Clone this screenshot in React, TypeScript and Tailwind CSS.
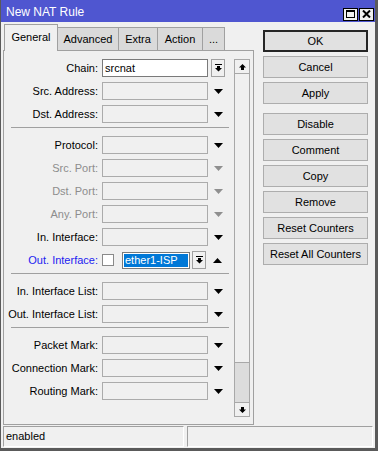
import React from 'react';

// Winbox-style "New NAT Rule" dialog
const ink = '#000';

function Down({ gray }: { gray?: boolean }) {
  return (
    <svg width="9" height="5" viewBox="0 0 9 5">
      <path d="M0 0h9L4.5 5z" fill={gray ? '#8f8f8f' : ink} />
    </svg>
  );
}

function Up() {
  return (
    <svg width="9" height="5" viewBox="0 0 9 5">
      <path d="M0 5h9L4.5 0z" fill={ink} />
    </svg>
  );
}

// combobox expand button: bar over a down arrow
function ComboBtn() {
  return (
    <div className="w-[14px] h-[18px] border border-[#a0a0a0] bg-[#f0f0f0] flex items-center justify-center">
      <svg width="7" height="8" viewBox="0 0 7 8">
        <path d="M0 0h7v1H0z M2 2h3v2h2L3.5 7.5 0 4h2z" fill={ink} />
      </svg>
    </div>
  );
}

function ScrollArrow({ down }: { down?: boolean }) {
  return (
    <svg width="7" height="6" viewBox="0 0 7 6" className={down ? 'rotate-180' : ''}>
      <path d="M3.5 0L7 3.5H5V6H2V3.5H0z" fill={ink} />
    </svg>
  );
}

type Kind = 'normal' | 'disabled';

function Row({ label, value, kind = 'normal', combo }: { label: string; value?: string; kind?: Kind; combo?: boolean }) {
  const disabled = kind === 'disabled';
  return (
    <div className="flex h-[18px] items-center">
      <div className={`w-[94px] text-right whitespace-nowrap ${disabled ? 'text-[#8d8d8d]' : 'text-black'}`}>{label}</div>
      <div
        className={`ml-[4px] w-[106px] h-[18px] border flex items-center pl-[2px] ${
          value !== undefined ? 'bg-white border-[#7a7a7a]' : 'bg-[#f0f0f0] border-[#ababab]'
        }`}
      >
        {value}
      </div>
      <div className="w-[20px] flex items-center justify-center">
        {combo ? <ComboBtn /> : <Down gray={disabled} />}
      </div>
    </div>
  );
}

function Sep() {
  return <div className="ml-[7px] mr-[2px] h-px bg-[#a0a0a0] -mt-px mb-[3px]" />;
}

function Btn({ children, primary, className = '' }: { children: React.ReactNode; primary?: boolean; className?: string }) {
  return (
    <div
      className={`h-[22px] w-[105px] flex items-center justify-center bg-[#e1e1e1] ${
        primary ? 'border-2 border-[#262626]' : 'border border-[#adadad]'
      } ${className}`}
    >
      {children}
    </div>
  );
}

const tabs = [
  { name: 'Advanced', w: 'w-[61px]' },
  { name: 'Extra', w: 'w-[39px]' },
  { name: 'Action', w: 'w-[45px]' },
  { name: '...', w: 'w-[22px]' },
];

export default function App() {
  return (
    <div className="w-[378px] h-[451px] bg-[#f0f0f0] border-l border-r-[3px] border-b-[3px] border-[#5a5a5a] text-[11px] leading-none text-black font-['Liberation_Sans',Arial,sans-serif] overflow-hidden">
      {/* title bar */}
      <div className="h-[22px] bg-[#4f56d0] flex items-center justify-between pl-[5px] pr-[1px]">
        <span className="text-white text-[12px] pt-[1px]">New NAT Rule</span>
        <div className="flex gap-[1px] mt-[6px]">
          <div className="w-[15px] h-[13px] bg-[#f0f0f0] border border-black flex items-center justify-center">
            <svg width="9" height="8" viewBox="0 0 9 8">
              <path d="M0 0h9v8H0z M1 2v5h7V2z" fill={ink} fillRule="evenodd" />
            </svg>
          </div>
          <div className="w-[15px] h-[13px] bg-[#f0f0f0] border border-black flex items-center justify-center">
            <svg width="9" height="8" viewBox="0 0 9 8">
              <path d="M1 0.5l7 7M8 0.5l-7 7" stroke={ink} strokeWidth="2" />
            </svg>
          </div>
        </div>
      </div>

      <div className="flex pt-[2px] pl-[2px]">
        {/* left: tabs + panel */}
        <div className="flex flex-col w-[251px]">
          <div className="flex h-[26px] items-end pl-px">
            <div className="relative z-10 -mb-px h-[27px] w-[54px] border border-b-0 border-[#a0a0a0] bg-[#f0f0f0] flex items-center justify-center pb-[2px]">
              General
            </div>
            {tabs.map((t) => (
              <div
                key={t.name}
                className={`${t.w} h-[23px] border border-l-0 border-b-0 border-[#a0a0a0] bg-[#dadada] flex items-center justify-center pt-[1px]`}
              >
                {t.name}
              </div>
            ))}
          </div>
          <div className="h-[375px] border border-[#a0a0a0] bg-[#f0f0f0] flex pt-[8px]">
            <div className="w-[227px] flex flex-col gap-[5px]">
              <Row label="Chain:" value="srcnat" combo />
              <Row label="Src. Address:" />
              <Row label="Dst. Address:" />
              <Sep />
              <Row label="Protocol:" />
              <Row label="Src. Port:" kind="disabled" />
              <Row label="Dst. Port:" kind="disabled" />
              <Row label="Any. Port:" kind="disabled" />
              <Row label="In. Interface:" />
              <div className="flex h-[18px] items-center">
                <div className="w-[94px] text-right whitespace-nowrap text-[#1c1cf0]">Out. Interface:</div>
                <div className="ml-[4px] w-[12px] h-[12px] bg-white border border-[#8a8a8a]" />
                <div className="ml-[8px] w-[68px] h-[17px] border border-[#7a7a7a] bg-white p-px">
                  <div className="h-full bg-[#0078d7] text-white flex items-center pl-px">ether1-ISP</div>
                </div>
                <div className="ml-[2px]">
                  <ComboBtn />
                </div>
                <div className="w-[22px] flex items-center justify-center">
                  <Up />
                </div>
              </div>
              <Sep />
              <Row label="In. Interface List:" />
              <Row label="Out. Interface List:" />
              <Sep />
              <Row label="Packet Mark:" />
              <Row label="Connection Mark:" />
              <Row label="Routing Mark:" />
            </div>
            {/* scrollbar */}
            <div className="ml-[3px] w-[16px] h-[358px] border border-[#a8a8a8] flex flex-col">
              <div className="h-[14px] border-b border-[#a8a8a8] flex items-center justify-center">
                <ScrollArrow />
              </div>
              <div className="flex-1" />
              <div className="h-[40px] bg-[#dcdcdc] border-t border-[#a8a8a8]" />
              <div className="h-[14px] border-t border-[#a8a8a8] flex items-center justify-center">
                <ScrollArrow down />
              </div>
            </div>
          </div>
        </div>

        {/* right: buttons */}
        <div className="ml-[9px] mt-[6px] flex flex-col gap-[4px]">
          <Btn primary>OK</Btn>
          <Btn>Cancel</Btn>
          <Btn>Apply</Btn>
          <Btn className="mt-[5px]">Disable</Btn>
          <Btn>Comment</Btn>
          <Btn>Copy</Btn>
          <Btn>Remove</Btn>
          <Btn>Reset Counters</Btn>
          <Btn>Reset All Counters</Btn>
        </div>
      </div>

      {/* status bar */}
      <div className="flex mt-[1px] pl-[2px] gap-[3px] h-[21px]">
        <div className="w-[181px] border-t border-l border-[#a0a0a0] border-b border-r border-b-white border-r-white flex items-center pl-[2px]">
          enabled
        </div>
        <div className="w-[186px] border-t border-l border-[#a0a0a0] border-b border-r border-b-white border-r-white" />
      </div>
    </div>
  );
}
